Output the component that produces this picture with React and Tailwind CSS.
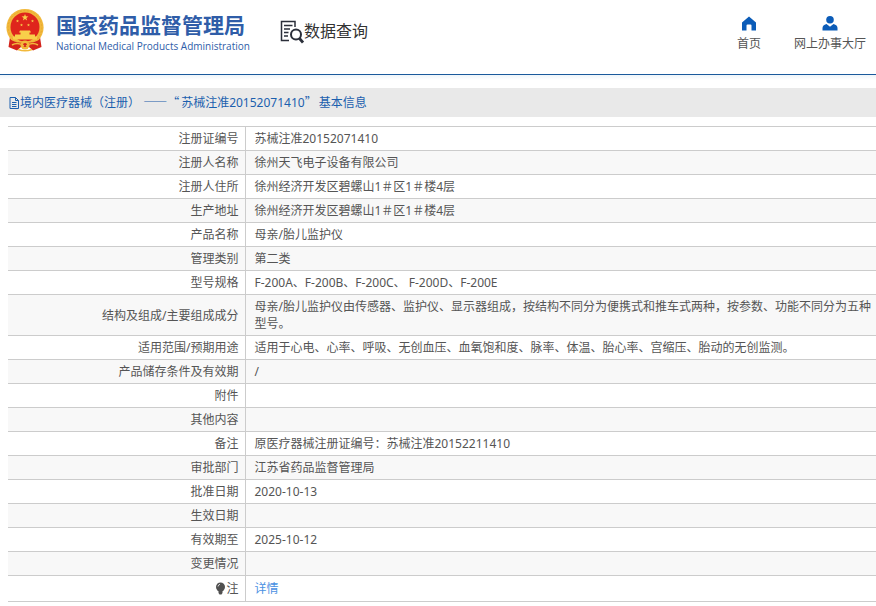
import React from 'react';

const rows = [
  ['注册证编号', '苏械注准20152071410'],
  ['注册人名称', '徐州天飞电子设备有限公司'],
  ['注册人住所', '徐州经济开发区碧螺山1＃区1＃楼4层'],
  ['生产地址', '徐州经济开发区碧螺山1＃区1＃楼4层'],
  ['产品名称', '母亲/胎儿监护仪'],
  ['管理类别', '第二类'],
  ['型号规格', 'F-200A、F-200B、F-200C、 F-200D、F-200E'],
  ['结构及组成/主要组成成分', '母亲/胎儿监护仪由传感器、监护仪、显示器组成，按结构不同分为便携式和推车式两种，按参数、功能不同分为五种型号。'],
  ['适用范围/预期用途', '适用于心电、心率、呼吸、无创血压、血氧饱和度、脉率、体温、胎心率、宫缩压、胎动的无创监测。'],
  ['产品储存条件及有效期', '/'],
  ['附件', ''],
  ['其他内容', ''],
  ['备注', '原医疗器械注册证编号：苏械注准20152211410'],
  ['审批部门', '江苏省药品监督管理局'],
  ['批准日期', '2020-10-13'],
  ['生效日期', ''],
  ['有效期至', '2025-10-12'],
  ['变更情况', ''],
];

const STAR = '0,-1 .24,-.32 .95,-.31 .38,.12 .59,.81 0,.4 -.59,.81 -.38,.12 -.95,-.31 -.24,-.32';

function Emblem() {
  return (
    <svg width="38" height="44" viewBox="0 0 38 44" aria-hidden="true">
      <path d="M4 29 L2.500 39 L11 42.500 L15 39 H23 L27 42.500 L35.500 39 L34 29Z" fill="#d3241b" />
      <circle cx="19" cy="19.500" r="18.600" fill="#f2b93b" />
      <circle cx="19" cy="19.500" r="16.800" fill="none" stroke="#e8a834" strokeWidth="1" strokeDasharray="2 1.500" />
      <circle cx="19" cy="19" r="14.500" fill="#df251c" />
      <g fill="#f8cf4a">
        <polygon points={STAR} transform="translate(19 9.500) scale(3.600)" />
        <polygon points={STAR} transform="translate(11.500 13) scale(1.600)" />
        <polygon points={STAR} transform="translate(26.500 13) scale(1.600)" />
        <polygon points={STAR} transform="translate(15.500 17) scale(1.600)" />
        <polygon points={STAR} transform="translate(22.500 17) scale(1.600)" />
        <path d="M14 22.500h10l1 2h-1.500v2H29v2h2v3H7v-3h2v-2h5.500v-2H13z" />
      </g>
      <path d="M5 32 Q12 36 19 34 Q26 36 33 32 L32 37 Q25 39 19 36.500 Q13 39 6 37Z" fill="#d3241b" />
      <circle cx="19" cy="37" r="4.500" fill="#f2b93b" />
      <circle cx="19" cy="37" r="2" fill="#d3241b" />
      <path d="M6 37 Q12 33.500 18 38 M32 37 Q26 33.500 20 38 M12 41.500 Q19 44 26 41.500" stroke="#f2b93b" strokeWidth="1.500" fill="none" />
    </svg>
  );
}

function SearchDoc() {
  return (
    <svg width="24" height="24" viewBox="0 0 24 24" fill="none" stroke="#2b2f3a" aria-hidden="true">
      <path d="M15 7V1.500H1.500V20.500H9" strokeWidth="1.500" />
      <path d="M4 5.500H12.500M4 9H10M4 12.500H8.500M4 16H8" strokeWidth="1.300" />
      <circle cx="16" cy="14.500" r="5" strokeWidth="2" />
      <path d="M19.500 18.500L23 22.500" strokeWidth="2.800" />
    </svg>
  );
}

export default function App() {
  return (
    <div lang="zh-CN" className="bg-white text-xs leading-[17px] text-[#555] [font-family:'Noto_Sans','Noto_Sans_CJK_SC',sans-serif]">
      <header className="flex h-[75px] items-start justify-between border-b border-[#1a5a9c] pr-[10px] pl-[6px]">
        <div className="flex">
          <div className="flex pt-2">
            <Emblem />
            <div className="ml-3 w-48 pt-1 text-[#2f5da8]">
              <h1 className="text-[21px] leading-6 font-bold whitespace-nowrap [font-family:'Noto_Sans_CJK_SC',sans-serif]">国家药品监督管理局</h1>
              <p className="pt-0.5 text-[10px] leading-4 font-medium whitespace-nowrap [font-family:'Open_Sans',sans-serif]">National Medical Products Administration</p>
            </div>
          </div>
          <div className="ml-8 flex pt-[20px] text-[#333]">
            <SearchDoc />
            <h2 className="text-base leading-5 whitespace-nowrap [font-family:'Noto_Sans_CJK_SC',sans-serif]">数据查询</h2>
          </div>
        </div>
        <nav className="flex gap-[33px] pt-4">
          <a href="#home" className="flex flex-col items-center gap-1">
            <svg width="16" height="15" viewBox="0 0 16 15" fill="#0b5cb8" aria-hidden="true">
              <path d="M8 0.500L15 6.500V14.500H10.500V9.500Q10.500 8.500 9.500 8.500H6.500Q5.500 8.500 5.500 9.500V14.500H1V6.500Z" />
            </svg>
            <span>首页</span>
          </a>
          <a href="#hall" className="flex flex-col items-center gap-1">
            <svg width="16" height="15" viewBox="0 0 16 15" fill="#0b5cb8" aria-hidden="true">
              <circle cx="8" cy="3.800" r="3.800" />
              <path d="M0.500 14.500V12Q0.500 9 4.500 8L8 10.800L11.500 8Q15.500 9 15.500 12V14.500Z" />
            </svg>
            <span>网上办事大厅</span>
          </a>
        </nav>
      </header>

      <div className="h-[13px] bg-linear-to-b from-[#eef5fa] to-white to-40%" />

      <div className="flex h-[29px] items-center bg-[#e9e9e9] pl-[9px] text-[#1b5fae]">
        <svg width="11" height="12" viewBox="0 0 11 12" fill="none" stroke="currentColor" aria-hidden="true">
          <path d="M1 .5H6.500L9.500 3.500V11.500H1ZM6.500 .5V3.500H9.500M3 5.500H7.500M3 7.500H7.500M3 9.500H7.500" />
        </svg>
        <h3 className="pb-px [text-spacing-trim:space-all]">
          境内医疗器械（注册） <span className="mr-0.5 [font-family:'Noto_Sans_CJK_SC',sans-serif] [font-variant-east-asian:full-width]">——“</span>苏械注准20152071410<span className="mr-0.5 [font-family:'Noto_Sans_CJK_SC',sans-serif] [font-variant-east-asian:full-width]">”</span>基本信息
        </h3>
      </div>

      <div className="pt-[9px] pl-2">
        <table className="w-full border-collapse border-b border-[#ccc]">
          <tbody>
            {rows.map(([label, value]) => (
              <tr key={label} className="border-t border-[#ccc] even:bg-[#f8f8f8]">
                <th scope="row" className="w-[237px] border-r border-[#ccc] py-[3px] pr-1.5 text-right font-normal">{label}</th>
                <td className="h-6 py-[3px] pr-1 pl-[9px]">{value}</td>
              </tr>
            ))}
            <tr className="border-t border-[#ccc]">
              <th scope="row" className="border-r border-[#ccc] py-1 pr-1.5 text-right font-normal">
                <span className="flex items-center justify-end">
                  <svg width="11" height="13" viewBox="0 0 11 13" aria-hidden="true">
                    <circle cx="5.500" cy="5" r="4.500" fill="#505050" />
                    <path d="M3.500 9H7.500V11L6.500 12.500H4.500L3.500 11Z" fill="#505050" />
                    <path d="M3 4.500Q3.200 2.700 5 2.300" stroke="#ddd" fill="none" />
                  </svg>
                  注
                </span>
              </th>
              <td className="py-1 pl-[9px]"><a href="#detail" className="text-[#4a90e2]">详情</a></td>
            </tr>
          </tbody>
        </table>
      </div>
    </div>
  );
}
